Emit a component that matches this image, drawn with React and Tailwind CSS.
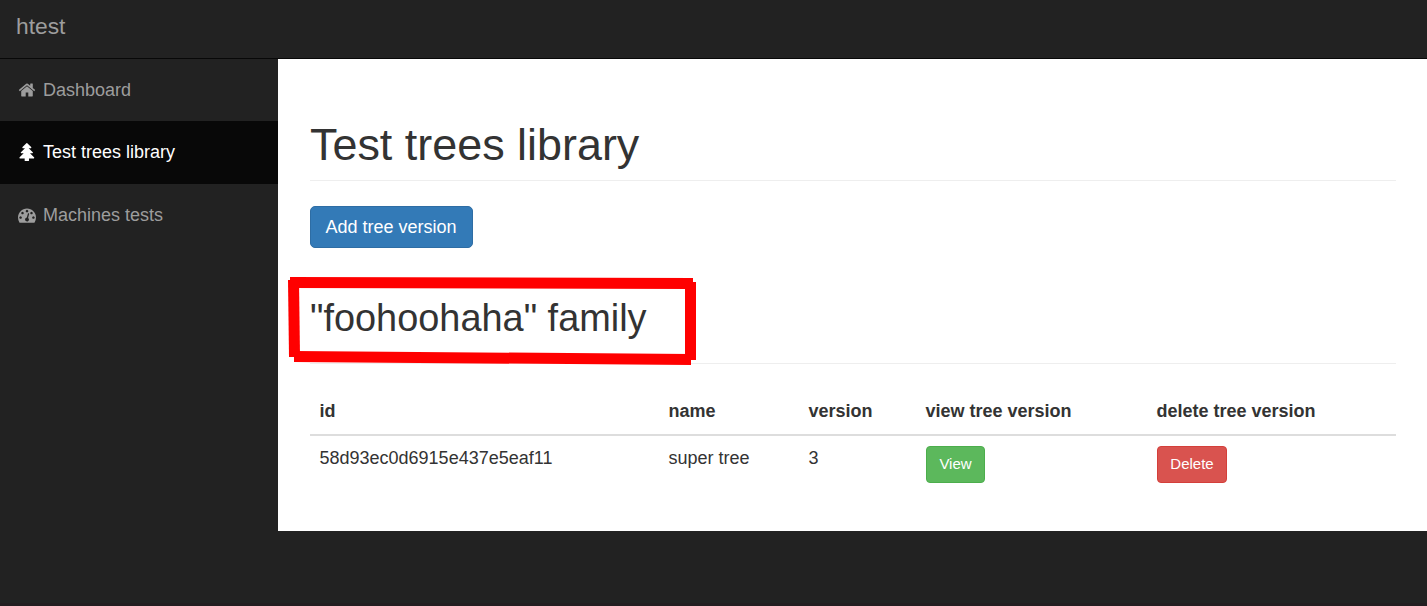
const HOME =
  'M1472 992v480q0 26-19 45t-45 19h-384v-384h-256v384h-384q-26 0-45-19t-19-45v-480q0-1 .5-3t.5-3l575-474 575 474q1 2 1 6zm223-69l-62 74q-8 9-21 11h-3q-13 0-21-7l-692-577-692 577q-12 8-24 7-13-2-21-11l-62-74q-8-10-7-23.5t11-21.5l719-599q32-26 76-26t76 26l244 204v-195q0-14 9-23t23-9h192q14 0 23 9t9 23v408l219 182q10 8 11 21.5t-7 23.5z';
const TREE =
  'M1616 1472q0 26-19 45t-45 19h-462q1 17 6 87.5t5 108.5q0 25-18 42.5t-43 17.5h-320q-25 0-43-17.5t-18-42.5q0-38 5-108.5t6-87.5h-462q-26 0-45-19t-19-45 19-45l402-403h-229q-26 0-45-19t-19-45 19-45l402-403h-197q-26 0-45-19t-19-45 19-45l384-384q19-19 45-19t45 19l384 384q19 19 19 45t-19 45-45 19h-197l402 403q19 19 19 45t-19 45-45 19h-229l402 403q19 19 19 45z';
const GAUGE =
  'M384 1152q0-53-37.5-90.5t-90.5-37.5-90.5 37.5-37.5 90.5 37.5 90.5 90.5 37.5 90.5-37.5 37.5-90.5zm192-448q0-53-37.5-90.5t-90.5-37.5-90.5 37.5-37.5 90.5 37.5 90.5 90.5 37.5 90.5-37.5 37.5-90.5zm428 481l101-382q6-26-7.5-48.5t-38.5-29.5-48 6.5-30 39.5l-101 382q-60 5-107 43.5t-63 98.5q-20 77 20 146t117 89 146-20 89-117q16-60-6-117t-72-91zm660-33q0-53-37.5-90.5t-90.5-37.5-90.5 37.5-37.5 90.5 37.5 90.5 90.5 37.5 90.5-37.5 37.5-90.5zm-640-640q0-53-37.5-90.5t-90.5-37.5-90.5 37.5-37.5 90.5 37.5 90.5 90.5 37.5 90.5-37.5 37.5-90.5zm448 192q0-53-37.5-90.5t-90.5-37.5-90.5 37.5-37.5 90.5 37.5 90.5 90.5 37.5 90.5-37.5 37.5-90.5zm320 448q0 261-141 483-19 29-54 29h-1402q-35 0-54-29-141-221-141-483 0-182 71-348t191-286 286-191 348-71 348 71 286 191 191 286 71 348z';

function NavItem({ icon, label, active }) {
  return (
    <a
      className={
        'flex items-start gap-[7px] pl-[18px] pt-[19px] ' +
        (active ? 'h-[63px] bg-[#080808] text-white' : 'h-[62px] text-[#9d9d9d]')
      }
    >
      <svg
        viewBox="0 0 1792 1792"
        className={'size-[18px] shrink-0 fill-current ' + (active ? 'mt-[3px]' : 'mt-[2.5px]')}
      >
        <path d={icon} />
      </svg>
      <span className="leading-[25px]">{label}</span>
    </a>
  );
}

function HighlightFrame() {
  return (
    <svg
      className="pointer-events-none absolute -left-[22px] -top-[25px]"
      width="408"
      height="90"
      viewBox="0 0 408 90"
      fill="red"
    >
      <path d="M2 0 L405 1 V12 L2 11Z" />
      <path d="M0 3 H11 L12 80 H1Z" />
      <path d="M6 74 L403 77 V88 L6 85Z" />
      <path d="M397 5 H408 V83 H397Z" />
    </svg>
  );
}

export default function App() {
  return (
    <div className="flex h-[606px] w-full flex-col overflow-hidden border-b-[3px] border-[#231d20] bg-[#222] font-['Liberation_Sans',Arial,sans-serif] text-[18px] leading-[25px] text-[#333]">
      <header className="flex h-[59px] shrink-0 items-start border-b border-[#080808] pl-4 pt-[14px] text-[22.8px] text-[#9d9d9d]">
        htest
      </header>
      <div className="flex min-h-0 flex-1 items-start">
        <nav className="w-[278px] shrink-0">
          <NavItem icon={HOME} label="Dashboard" />
          <NavItem icon={TREE} label="Test trees library" active />
          <NavItem icon={GAUGE} label="Machines tests" />
        </nav>
        <main className="h-[472px] min-w-0 flex-1 bg-white pl-8 pr-[31px] pt-[61px]">
          <h1 className="h-[61px] border-b border-[#eee] text-[44.9px] leading-[50px]">
            Test trees library
          </h1>
          <button className="mt-[25px] block h-[42px] w-[163px] rounded-[5px] border border-[#2e6da4] bg-[#337ab7] pr-px text-white">
            Add tree version
          </button>
          <div className="relative mt-[54px] h-[62px] border-b border-[#eee]">
            <h2 className="text-[37.9px] leading-[32px]">&quot;foohoohaha&quot; family</h2>
            <HighlightFrame />
          </div>
          <table className="mt-[24px] w-full table-fixed border-collapse text-left">
            <colgroup>
              <col className="w-[349px]" />
              <col className="w-[140px]" />
              <col className="w-[117px]" />
              <col className="w-[231px]" />
              <col />
            </colgroup>
            <thead>
              <tr className="h-[47px] align-top">
                {['id', 'name', 'version', 'view tree version', 'delete tree version'].map((h) => (
                  <th key={h} className="pl-[9.5px] pt-[11px] font-bold">
                    {h}
                  </th>
                ))}
              </tr>
            </thead>
            <tbody>
              <tr className="border-t-2 border-[#ddd] align-top">
                <td className="pl-[9.5px] pt-[10px]">58d93ec0d6915e437e5eaf11</td>
                <td className="pl-[9.5px] pt-[10px]">super tree</td>
                <td className="pl-[9.5px] pt-[10px]">3</td>
                <td className="pl-[10px] pt-[10px]">
                  <button className="block h-[37px] w-[59px] rounded-[4px] border border-[#4cae4c] bg-[#5cb85c] pb-[2px] text-[15px] leading-[22px] text-white">
                    View
                  </button>
                </td>
                <td className="pl-[10px] pt-[10px]">
                  <button className="block h-[37px] w-[70px] rounded-[4px] border border-[#d43f3a] bg-[#d9534f] pb-[2px] text-[15px] leading-[22px] text-white">
                    Delete
                  </button>
                </td>
              </tr>
            </tbody>
          </table>
        </main>
      </div>
    </div>
  );
}
